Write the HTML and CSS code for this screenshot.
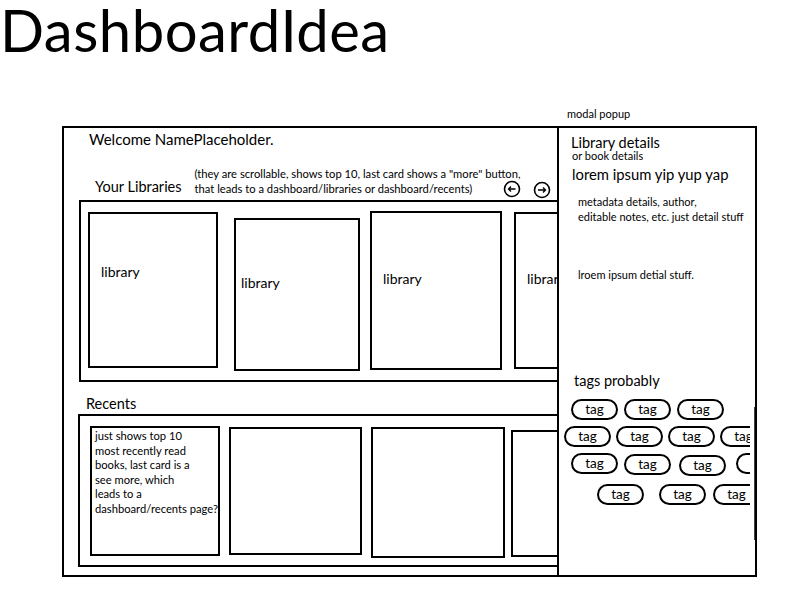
FILE: index.html
```html
<!DOCTYPE html>
<html>
<head>
<meta charset="utf-8">
<link rel="stylesheet" href="styles.css">
</head>
<body>
<h1 class="title">DashboardIdea</h1>
<div class="canvas">
  <div class="frame">
    <div class="welcome">Welcome NamePlaceholder.</div>
    <div class="lib-head">
      <div class="section-label">Your Libraries</div>
      <div class="note">(they are scrollable, shows top 10, last card shows a "more" button,<br>that leads to a dashboard/libraries or dashboard/recents)</div>
      <div class="arrows">
        <svg class="arrow arrow-left" width="18" height="18" viewBox="0 0 18 18"><circle cx="9" cy="9" r="7.5" fill="none" stroke="#000" stroke-width="1.6"/><path d="M12.5 9H5.5M8 6.5L5.5 9L8 11.5" fill="none" stroke="#000" stroke-width="1.3"/></svg>
        <svg class="arrow arrow-right" width="18" height="18" viewBox="0 0 18 18"><circle cx="9" cy="9" r="7.5" fill="none" stroke="#000" stroke-width="1.6"/><path d="M5 9H12.5M10 6.5L12.5 9L10 11.5" fill="none" stroke="#000" stroke-width="1.3"/></svg>
      </div>
    </div>
    <div class="strip lib-strip">
      <div class="card lib1"><span>library</span></div>
      <div class="card lib2"><span>library</span></div>
      <div class="card lib3"><span>library</span></div>
      <div class="card lib4"><span>library</span></div>
    </div>
    <div class="section-label recents-label">Recents</div>
    <div class="strip rec-strip">
      <div class="card rec1"><p>just shows top 10<br>most recently read<br>books, last card is a<br>see more, which<br>leads to a<br>dashboard/recents page?</p></div>
      <div class="card rec2"></div>
      <div class="card rec3"></div>
      <div class="card rec4"></div>
    </div>
  </div>
  <div class="modal-note">modal popup</div>
  <div class="modal">
    <div class="m-title">Library details</div>
    <div class="m-sub">or book details</div>
    <div class="m-lorem">lorem ipsum yip yup yap</div>
    <div class="m-meta">metadata details, author,<br>editable notes, etc. just detail stuff</div>
    <div class="m-meta m-detail">lroem ipsum detial stuff.</div>
    <div class="m-tags-label">tags probably</div>
    <div class="tags">
      <div class="tag-row row1"><span class="tag">tag</span><span class="tag">tag</span><span class="tag">tag</span></div>
      <div class="tag-row row2"><span class="tag">tag</span><span class="tag">tag</span><span class="tag">tag</span><span class="tag">tag</span></div>
      <div class="tag-row row3"><span class="tag">tag</span><span class="tag t-low">tag</span><span class="tag t-lower">tag</span><span class="tag">tag</span></div>
      <div class="tag-row row4"><span class="tag">tag</span><span class="tag">tag</span><span class="tag">tag</span></div>
    </div>
  </div>
</div>
</body>
</html>
```
FILE: styles.css
```css
html, body {
  margin: 0;
  padding: 0;
  background: #fff;
  color: #000;
  font-family: Lato, "Open Sans", sans-serif;
}

.title {
  margin: 0;
  height: 66px;
  font-size: 58px;
  font-weight: 400;
  line-height: 60px;
  letter-spacing: 0.5px;
  white-space: nowrap;
}

.canvas {
  position: relative;
  height: 474px;
  padding-top: 60px;
}

.frame {
  margin-left: 62px;
  width: 493px;
  height: 447px;
  border: 2px solid #000;
  overflow: hidden;
}

.welcome {
  font-size: 15px;
  line-height: 18px;
  padding-top: 2px;
  padding-left: 25px;
}

.lib-head {
  display: flex;
  align-items: flex-end;
  margin-top: 16px;
  height: 32px;
}

.section-label {
  font-size: 14.5px;
  line-height: 18px;
}

.lib-head .section-label {
  padding-left: 31px;
}

.note {
  font-size: 11.2px;
  line-height: 15px;
  margin-left: 13px;
  white-space: nowrap;
}

.arrows {
  display: flex;
  gap: 12px;
  margin-left: -17px;
  margin-bottom: -3px;
}

.arrow-right {
  margin-top: 1px;
}

.strip {
  display: flex;
  align-items: flex-start;
  border: 2px solid #000;
  width: 560px;
  box-sizing: border-box;
}

.lib-strip {
  margin-top: 4px;
  margin-left: 15px;
  height: 182px;
}

.card {
  flex: none;
  border: 2px solid #000;
  box-sizing: border-box;
  font-size: 14px;
  line-height: 18px;
}

.card span {
  display: block;
  white-space: nowrap;
}

.lib1 { margin: 10px 0 0 7px; width: 130px; height: 156px; }
.lib1 span { padding: 49px 0 0 11px; }
.lib2 { margin: 16px 0 0 16px; width: 126px; height: 153px; }
.lib2 span { padding: 54px 0 0 5px; }
.lib3 { margin: 9px 0 0 10px; width: 132px; height: 159px; }
.lib3 span { padding: 57px 0 0 11px; }
.lib4 { margin: 10px 0 0 12px; width: 80px; height: 157px; }
.lib4 span { padding: 56px 0 0 11px; }

.recents-label {
  margin-top: 13px;
  padding-left: 22px;
}

.rec-strip {
  margin-top: 1px;
  margin-left: 14px;
  height: 153px;
}

.rec1 { margin: 10px 0 0 10px; width: 130px; height: 130px; overflow: hidden; }
.rec1 p {
  margin: 0;
  padding: 1px 0 0 3px;
  font-size: 11.2px;
  line-height: 14.5px;
  white-space: nowrap;
}
.rec2 { margin: 11px 0 0 9px; width: 133px; height: 128px; }
.rec3 { margin: 11px 0 0 9px; width: 134px; height: 131px; }
.rec4 { margin: 14px 0 0 6px; width: 80px; height: 127px; }

.modal-note {
  position: absolute;
  left: 567px;
  top: 42px;
  font-size: 11px;
  line-height: 12px;
}

.modal {
  position: absolute;
  left: 557px;
  top: 60px;
  width: 200px;
  height: 451px;
  box-sizing: border-box;
  border: 2px solid #000;
  background: #fff;
  padding-left: 12px;
}

.modal::after {
  content: "";
  position: absolute;
  right: 0;
  top: 279px;
  width: 1px;
  height: 133px;
  background: #444;
}

.m-title {
  margin-top: 7px;
  font-size: 14.5px;
  line-height: 15px;
}

.m-sub {
  margin-top: 0;
  padding-left: 1px;
  font-size: 11px;
  line-height: 11px;
}

.m-lorem {
  margin-top: 5px;
  padding-left: 1px;
  font-size: 14.8px;
  line-height: 16px;
}

.m-meta {
  margin-top: 12px;
  padding-left: 7px;
  font-size: 11px;
  line-height: 15px;
  white-space: nowrap;
}

.m-detail {
  margin-top: 43px;
}

.m-tags-label {
  margin-top: 91px;
  padding-left: 3px;
  font-size: 14.5px;
  line-height: 16px;
}

.tags {
  margin-left: -12px;
  margin-top: 10px;
  width: 191px;
  height: 112px;
  overflow: hidden;
}

.tag-row {
  display: flex;
  align-items: flex-start;
  height: 21px;
  margin-bottom: 6px;
}

.tag {
  flex: none;
  display: flex;
  align-items: center;
  justify-content: center;
  width: 47px;
  height: 21px;
  box-sizing: border-box;
  border: 2px solid #000;
  border-radius: 11px;
  font-size: 13.5px;
  line-height: 16px;
  padding-bottom: 1px;
}

.row1 { padding-left: 12px; gap: 6px; }
.row2 { padding-left: 5px; gap: 5px; }
.row3 { padding-left: 12px; gap: 6px; }
.row3 .tag:nth-child(3) { margin-left: 2px; }
.row3 .tag:nth-child(4) { margin-left: 4px; }
.t-low { margin-top: 1px; }
.t-lower { margin-top: 2px; }
.row4 { margin-top: 10px; padding-left: 38px; gap: 7px; }
.row4 .tag:nth-child(2) { margin-left: 8px; }
```
